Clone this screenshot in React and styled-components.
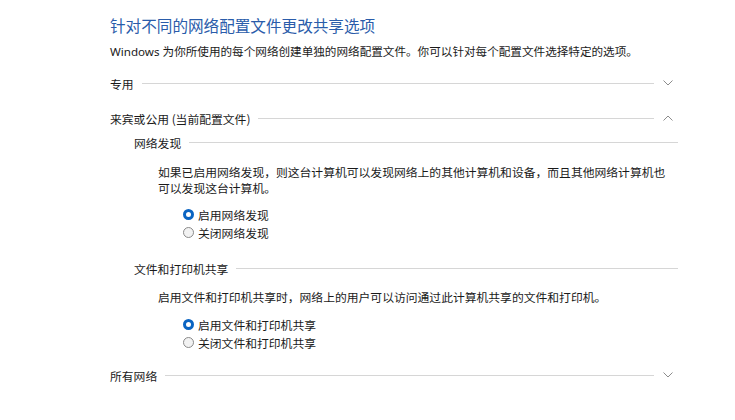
import React from "react";
import styled, { createGlobalStyle } from "styled-components";

const GlobalStyle = createGlobalStyle`
  html, body {
    margin: 0;
    padding: 0;
    background: #ffffff;
  }
  body {
    font-family: "Noto Sans CJK SC", "Noto Sans", sans-serif;
    color: #1a1a1a;
  }
`;

const Page = styled.div`
  width: 735px;
  height: 420px;
  box-sizing: border-box;
  padding: 15px 0 0 110px;
  overflow: hidden;
`;

const Title = styled.h1`
  margin: 0;
  font-size: 15.6px;
  font-weight: 400;
  line-height: 20px;
  color: #2a5caa;
`;

const Intro = styled.p`
  margin: 9px 0 0;
  font-size: 11.6px;
  line-height: 16px;
  color: #1a1a1a;
  font-family: "Noto Sans", "Noto Sans CJK SC", sans-serif;
`;

const Section = styled.div`
  margin-top: ${(p) => p.$top || 0}px;
`;

const HeaderRow = styled.div`
  display: flex;
  align-items: center;
  gap: 8px;
  height: 24px;
  width: ${(p) => (p.$sub ? 544 : 565)}px;
  margin-left: ${(p) => (p.$sub ? 24 : 0)}px;
  font-size: 11.8px;
  color: #1a1a1a;
  white-space: nowrap;
`;

const Rule = styled.div`
  flex: 1;
  height: 1px;
  background: #d6d6d6;
`;

const Chevron = styled.svg`
  width: 10px;
  height: 6px;
  margin-left: 1px;
  margin-right: 2px;
  flex: none;
`;

const Body = styled.div`
  margin-left: 48px;
`;

const Para = styled.p`
  margin: ${(p) => p.$top || 0}px 0 0;
  width: 540px;
  font-size: 11.8px;
  line-height: 16px;
  color: #1a1a1a;
`;

const RadioList = styled.div`
  display: flex;
  flex-direction: column;
  margin: ${(p) => p.$top || 0}px 0 0 25px;
`;

const RadioRow = styled.label`
  display: flex;
  align-items: center;
  gap: 4px;
  height: 18px;
  font-size: 11.8px;
  color: #1a1a1a;
`;

const RadioDot = styled.span`
  box-sizing: border-box;
  width: 11px;
  height: 11px;
  border-radius: 50%;
  flex: none;
  background: ${(p) => (p.$on ? "#ffffff" : "#f2f2f2")};
  border: ${(p) => (p.$on ? "3px solid #0a64c2" : "1px solid #8a8a8a")};
`;

const Down = () => (
  <Chevron viewBox="0 0 10 6">
    <path d="M0.5 0.5 L5 5 L9.5 0.5" fill="none" stroke="#8c8c8c" strokeWidth="1" />
  </Chevron>
);

const Up = () => (
  <Chevron viewBox="0 0 10 6">
    <path d="M0.5 5.5 L5 1 L9.5 5.5" fill="none" stroke="#8c8c8c" strokeWidth="1" />
  </Chevron>
);

const Radio = ({ on, children }) => (
  <RadioRow>
    <RadioDot $on={on} />
    {children}
  </RadioRow>
);

export default function App() {
  return (
    <Page>
      <GlobalStyle />
      <Title>针对不同的网络配置文件更改共享选项</Title>
      <Intro>
        Windows 为你所使用的每个网络创建单独的网络配置文件。你可以针对每个配置文件选择特定的选项。
      </Intro>

      <Section $top={11}>
        <HeaderRow>
          专用
          <Rule />
          <Down />
        </HeaderRow>
      </Section>

      <Section $top={11}>
        <HeaderRow>
          来宾或公用 (当前配置文件)
          <Rule />
          <Up />
        </HeaderRow>

        <HeaderRow $sub>
          网络发现
          <Rule />
        </HeaderRow>
        <Body>
          <Para $top={10}>
            如果已启用网络发现，则这台计算机可以发现网络上的其他计算机和设备，而且其他网络计算机也
            <br />
            可以发现这台计算机。
          </Para>
          <RadioList $top={9}>
            <Radio on>启用网络发现</Radio>
            <Radio>关闭网络发现</Radio>
          </RadioList>
        </Body>

        <Section $top={15}>
          <HeaderRow $sub>
            文件和打印机共享
            <Rule />
          </HeaderRow>
        </Section>
        <Body>
          <Para $top={9}>
            启用文件和打印机共享时，网络上的用户可以访问通过此计算机共享的文件和打印机。
          </Para>
          <RadioList $top={10}>
            <Radio on>启用文件和打印机共享</Radio>
            <Radio>关闭文件和打印机共享</Radio>
          </RadioList>
        </Body>
      </Section>

      <Section $top={12}>
        <HeaderRow>
          所有网络
          <Rule />
          <Down />
        </HeaderRow>
      </Section>
    </Page>
  );
}
